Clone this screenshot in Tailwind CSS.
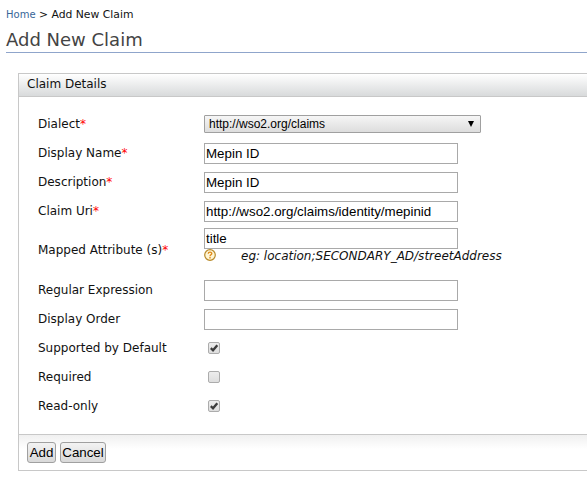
<!DOCTYPE html>
<html lang="en">
<head>
<meta charset="utf-8">
<title>Add New Claim</title>
<script src="https://cdn.jsdelivr.net/npm/@tailwindcss/browser@4"></script>
</head>
<body class="bg-white w-[587px] h-[484px] overflow-hidden font-['DejaVu_Sans',sans-serif] text-[12px] leading-[15px] text-[#111]">
<nav class="pl-[6px] pt-[7px] h-[28px] text-[10.8px] leading-[15px] whitespace-pre"><a class="text-[#386698] text-[10px]">Home</a> &gt; Add New Claim</nav>
<h1 class="ml-[6px] h-[25px] border-b border-[#8fa5cb] text-[18px] leading-[24px] text-[#444]">Add New Claim</h1>
<main class="ml-[18px] mt-[20px] w-[569px] h-[398px] border border-r-0 border-[#c8c8c8] flex flex-col">
  <h2 class="h-[23px] shrink-0 pl-[8px] pt-[3px] border-b border-[#c8c8c8] bg-linear-to-b from-white to-[#d8dadb] leading-[15px]">Claim Details</h2>
  <form class="h-[337px] shrink-0 pt-[12px] pl-[19px]">
    <div class="flex items-center h-[29px]"><label class="w-[166px] pt-[2px]">Dialect<span class="text-[#f00]">*</span></label>
      <div class="w-[277px] h-[18px] border border-[#a0a0a0] rounded-[1px] bg-linear-to-b from-[#f6f6f6] to-[#dddddd] flex items-center justify-between pl-[4px] pr-[6px] font-['Liberation_Sans',sans-serif] text-[12px] leading-[16px] text-black"><span>http://wso2.org/claims</span><svg width="6" height="6" viewBox="0 0 6 6"><path d="M0 0H6L3 6Z" fill="#000"/></svg></div></div>
    <div class="flex items-center h-[29px] pt-[2px]"><label class="w-[166px]">Display Name<span class="text-[#f00]">*</span></label>
      <input value="Mepin ID" class="w-[254px] h-[21px] border border-[#a9a9a9] px-px font-['Liberation_Sans',sans-serif] text-[13.333px] text-black"></div>
    <div class="flex items-center h-[29px] pt-[2px]"><label class="w-[166px]">Description<span class="text-[#f00]">*</span></label>
      <input value="Mepin ID" class="w-[254px] h-[21px] border border-[#a9a9a9] px-px font-['Liberation_Sans',sans-serif] text-[13.333px] text-black"></div>
    <div class="flex items-center h-[29px] pt-[2px]"><label class="w-[166px]">Claim Uri<span class="text-[#f00]">*</span></label>
      <input value="http://wso2.org/claims/identity/mepinid" class="w-[254px] h-[21px] border border-[#a9a9a9] px-px font-['Liberation_Sans',sans-serif] text-[13.333px] text-black"></div>
    <div class="flex items-center h-[50px]"><label class="w-[166px]">Mapped Attribute (s)<span class="text-[#f00]">*</span></label>
      <div class="h-[50px] pt-[3px]">
        <input value="title" class="block w-[254px] h-[21px] border border-[#a9a9a9] px-px font-['Liberation_Sans',sans-serif] text-[13.333px] text-black">
        <div class="flex items-start"><svg class="w-[12px] h-[12px] mr-[25px]" viewBox="0 0 12 12" fill="none"><circle cx="6" cy="6" r="5.3" fill="#fff6d5" stroke="#b88a2a" stroke-width="1.2"/><path d="M4.2 4.7C4.2 2.6 7.8 2.6 7.8 4.5C7.8 5.8 6 5.9 6 7.3" stroke="#e08a1a" stroke-width="1.3"/><path d="M5.3 8.1h1.4v1.3H5.3z" fill="#e08a1a"/></svg><em class="whitespace-nowrap">eg: location;SECONDARY_AD/streetAddress</em></div>
      </div></div>
    <div class="flex items-center h-[29px] pt-[2px]"><label class="w-[166px]">Regular Expression</label>
      <input class="w-[254px] h-[21px] border border-[#a9a9a9]"></div>
    <div class="flex items-center h-[29px] pt-[2px]"><label class="w-[166px]">Display Order</label>
      <input class="w-[254px] h-[21px] border border-[#a9a9a9]"></div>
    <div class="flex items-center h-[29px]"><label class="w-[170px] pt-[2px]">Supported by Default</label>
      <span class="size-[12px] border border-[#acacac] rounded-[2px] bg-linear-to-b from-[#ededed] to-[#dedede]"><svg class="size-[10px]" viewBox="0 0 10 10"><path d="M1.8 5.2L4 7.3L8.3 2.2" fill="none" stroke="#3b3b3b" stroke-width="2.3"/></svg></span></div>
    <div class="flex items-center h-[29px]"><label class="w-[170px] pt-[2px]">Required</label>
      <span class="size-[12px] border border-[#acacac] rounded-[2px] bg-linear-to-b from-[#ededed] to-[#dedede]"></span></div>
    <div class="flex items-center h-[29px]"><label class="w-[170px] pt-[2px]">Read-only</label>
      <span class="size-[12px] border border-[#acacac] rounded-[2px] bg-linear-to-b from-[#ededed] to-[#dedede]"><svg class="size-[10px]" viewBox="0 0 10 10"><path d="M1.8 5.2L4 7.3L8.3 2.2" fill="none" stroke="#3b3b3b" stroke-width="2.3"/></svg></span></div>
  </form>
  <footer class="grow border-t border-[#c8c8c8] bg-linear-to-b from-[#f0f0f0] to-white to-40% pl-[8px] pt-[7px] flex items-start gap-[4px] font-['Liberation_Sans',sans-serif] text-[13.333px] text-black">
    <button class="w-[29px] h-[21px] border border-[#a0a0a0] rounded-[3px] bg-linear-to-b from-[#f3f3f3] to-[#d9d9d9] leading-[19px]">Add</button>
    <button class="w-[46px] h-[21px] border border-[#a0a0a0] rounded-[3px] bg-linear-to-b from-[#f3f3f3] to-[#d9d9d9] leading-[19px]">Cancel</button>
  </footer>
</main>
</body>
</html>
